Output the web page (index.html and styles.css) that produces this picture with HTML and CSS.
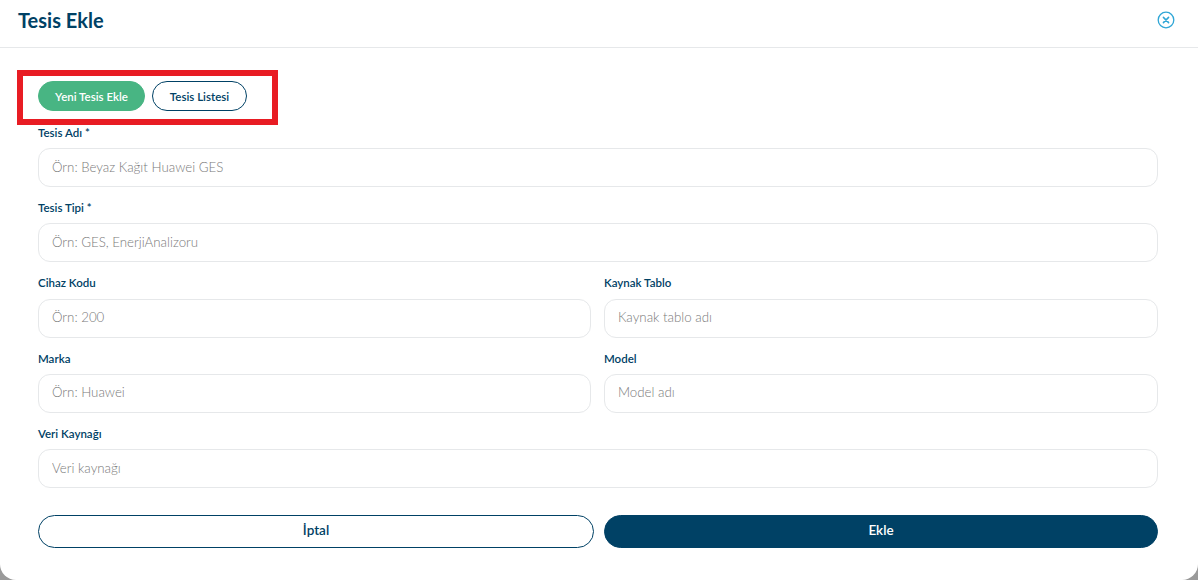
FILE: index.html
```html
<!DOCTYPE html>
<html lang="en">
<head>
  <meta charset="UTF-8" />
  <title>Tesis Ekle</title>
  <link rel="stylesheet" href="styles.css">
</head>
<body>

  <div class="modal">
    <header class="modal-header">
      <div class="title">Tesis Ekle</div>
      <button class="close-btn" aria-label="Kapat">
        <svg width="18" height="18" viewBox="0 0 18 18" fill="none" stroke="#2fa6d6" stroke-width="1.3" stroke-linecap="round">
          <circle cx="9" cy="9" r="7.8"/>
          <path d="M6.4 6.4l5.2 5.2M11.6 6.4l-5.2 5.2" stroke-width="1.5"/>
        </svg>
      </button>
    </header>

    <div class="modal-body">
      <div class="tabs">
        <button class="tab active">Yeni Tesis Ekle</button>
        <button class="tab">Tesis Listesi</button>
      </div>
      <div class="highlight"></div>

      <form class="form">
        <div class="field">
          <label>Tesis Adı *</label>
          <input type="text" placeholder="Örn: Beyaz Kağıt Huawei GES" />
        </div>
        <div class="field">
          <label>Tesis Tipi *</label>
          <input type="text" placeholder="Örn: GES, EnerjiAnalizoru" />
        </div>
        <div class="row">
          <div class="field">
            <label>Cihaz Kodu</label>
            <input type="text" placeholder="Örn: 200" />
          </div>
          <div class="field">
            <label>Kaynak Tablo</label>
            <input type="text" placeholder="Kaynak tablo adı" />
          </div>
        </div>
        <div class="row">
          <div class="field">
            <label>Marka</label>
            <input type="text" placeholder="Örn: Huawei" />
          </div>
          <div class="field">
            <label>Model</label>
            <input type="text" placeholder="Model adı" />
          </div>
        </div>
        <div class="field">
          <label>Veri Kaynağı</label>
          <input type="text" placeholder="Veri kaynağı" />
        </div>

        <div class="actions">
          <button type="button" class="btn btn-outline">İptal</button>
          <button type="button" class="btn btn-primary">Ekle</button>
        </div>
      </form>
    </div>
  </div>

</body>
</html>
```

FILE: styles.css
```css
:root {
  --navy: #004165;
  --green: #48b583;
  --line: #e6e8ea;
}

* {
  box-sizing: border-box;
}

html, body {
  height: 100%;
}

body {
  margin: 0;
  background: #9a9a9a;
  font-family: "Lato", "Liberation Sans", sans-serif;
  color: var(--navy);
  overflow: hidden;
}

.modal {
  height: 580px;
  background: #fff;
  border-radius: 0 0 16px 16px;
}

.modal-header {
  height: 48px;
  padding: 0 23px 7px 18px;
  display: flex;
  justify-content: space-between;
  align-items: center;
  border-bottom: 1px solid var(--line);
}

.title {
  font-size: 20px;
  font-weight: 700;
}

.close-btn {
  background: none;
  border: none;
  padding: 0;
  display: flex;
  cursor: pointer;
}

.modal-body {
  position: relative;
  padding: 33px 40px 0 38px;
}

.tabs {
  display: flex;
  gap: 7px;
  height: 30px;
}

.tab {
  width: 95px;
  height: 30px;
  padding: 0;
  border: 1px solid var(--navy);
  border-radius: 15px;
  background: #fff;
  color: var(--navy);
  font-family: inherit;
  font-size: 11.5px;
  font-weight: 600;
}

.tab.active {
  width: 107px;
  background: var(--green);
  border-color: var(--green);
  color: #fff;
}

/* red annotation frame around the tabs */
.highlight {
  position: absolute;
  left: 17px;
  top: 22px;
  width: 261px;
  height: 55px;
  border: 6px solid #e81c23;
}

.form {
  display: flex;
  flex-direction: column;
  gap: 12.95px;
  padding-top: 13.9px;
}

.row {
  display: grid;
  grid-template-columns: 553px 554px;
  gap: 13px;
}

.field {
  display: flex;
  flex-direction: column;
  gap: 7.3px;
}

label {
  height: 16px;
  line-height: 16px;
  font-size: 11.5px;
  font-weight: 600;
}

input {
  width: 100%;
  height: 39px;
  padding: 0 13px 2px;
  border: 1px solid var(--line);
  border-radius: 12px;
  background: #fff;
  font-family: inherit;
  font-size: 13.3px;
  color: var(--navy);
}

input::placeholder {
  color: #7a7a7a;
  font-weight: 300;
}

.actions {
  display: grid;
  grid-template-columns: 556px 554px;
  gap: 10px;
  margin-top: 13.85px;
}

.btn {
  height: 33px;
  padding: 0 0 3px;
  border: 1px solid var(--navy);
  border-radius: 17px;
  font-family: inherit;
  font-size: 13.5px;
  font-weight: 600;
  cursor: pointer;
}

.btn-outline {
  background: #fff;
  color: var(--navy);
}

.btn-primary {
  background: var(--navy);
  color: #fff;
}
```
